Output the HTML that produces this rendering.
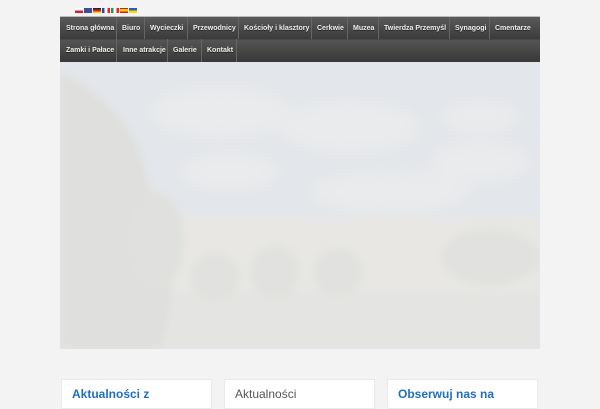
<!DOCTYPE html>
<html><head><meta charset="utf-8"><style>
*{margin:0;padding:0;box-sizing:border-box}
body{width:600px;height:400px;background:#f3f3f3;position:relative;overflow:hidden;font-family:"Liberation Sans",sans-serif}
.fl{position:absolute;top:8px;width:8px;height:5px}
.topline{position:absolute;left:60px;top:16px;width:480px;height:1px;background:#bbb}
.nav{position:absolute;left:60px;top:17px;width:480px;height:45px;background:linear-gradient(#5a5a5a,#3a3a3a 50%,#555 50%,#383838)}
.nav span{position:absolute;color:#eee;font-size:7px;font-weight:bold;white-space:nowrap;text-shadow:0 1px 0 #222}
.sep{position:absolute;width:1px;background:#2e2e2e;border-right:1px solid #666}
.photo{position:absolute;left:60px;top:62px;width:480px;height:287px;overflow:hidden;background:#e4e6e9}
.box{position:absolute;top:379px;width:151px;height:30px;background:#fff;border:1px solid #eaeaea}
.box b{position:absolute;left:10px;top:7px;font-size:12px;color:#1f6fc0}
</style></head><body>
<div class="fl" style="left:75px;background:linear-gradient(#fff 50%,#d2203a 50%)"></div>
<div class="fl" style="left:84px;background:#3d4f8e"></div>
<div class="fl" style="left:93px;background:linear-gradient(#222 33%,#d22 33%,#d22 66%,#fc0 66%)"></div>
<div class="fl" style="left:102px;background:linear-gradient(90deg,#2547a8 33%,#fff 33%,#fff 66%,#e22 66%)"></div>
<div class="fl" style="left:111px;background:linear-gradient(90deg,#1a9a4a 33%,#fff 33%,#fff 66%,#e22 66%)"></div>
<div class="fl" style="left:120px;background:linear-gradient(#c22 25%,#fc0 25%,#fc0 75%,#c22 75%)"></div>
<div class="fl" style="left:129px;background:linear-gradient(#2a5bc0 50%,#fd0 50%)"></div>
<div class="topline"></div>
<div class="nav">
<span style="left:6px;top:8px">Strona główna</span>
<span style="left:62px;top:8px">Biuro</span>
<span style="left:90px;top:8px">Wycieczki</span>
<span style="left:133px;top:8px">Przewodnicy</span>
<span style="left:184px;top:8px">Kościoły i klasztory</span>
<span style="left:257px;top:8px">Cerkwie</span>
<span style="left:293px;top:8px">Muzea</span>
<span style="left:324px;top:8px">Twierdza Przemyśl</span>
<span style="left:395px;top:8px">Synagogi</span>
<span style="left:435px;top:8px">Cmentarze</span>
<span style="left:6px;top:30px">Zamki i Pałace</span>
<span style="left:63px;top:30px">Inne atrakcje</span>
<span style="left:113px;top:30px">Galerie</span>
<span style="left:147px;top:30px">Kontakt</span>
<div class="sep" style="left:56px;top:0;height:22px"></div>
<div class="sep" style="left:84px;top:0;height:22px"></div>
<div class="sep" style="left:127px;top:0;height:22px"></div>
<div class="sep" style="left:178px;top:0;height:22px"></div>
<div class="sep" style="left:251px;top:0;height:22px"></div>
<div class="sep" style="left:287px;top:0;height:22px"></div>
<div class="sep" style="left:318px;top:0;height:22px"></div>
<div class="sep" style="left:389px;top:0;height:22px"></div>
<div class="sep" style="left:429px;top:0;height:22px"></div>
<div class="sep" style="left:56px;top:22px;height:23px"></div>
<div class="sep" style="left:107px;top:22px;height:23px"></div>
<div class="sep" style="left:141px;top:22px;height:23px"></div>
<div class="sep" style="left:176px;top:22px;height:23px"></div>
</div>
<div class="photo">
<svg width="480" height="287" viewBox="0 0 480 287">
<defs><filter id="b"><feGaussianBlur stdDeviation="8"/></filter><filter id="s"><feGaussianBlur stdDeviation="4"/></filter></defs>
<rect width="480" height="287" fill="#e3e6ea"/>
<g filter="url(#b)" fill="#eaebec">
<ellipse cx="160" cy="50" rx="70" ry="25"/><ellipse cx="290" cy="65" rx="70" ry="25"/>
<ellipse cx="420" cy="55" rx="40" ry="15"/><ellipse cx="170" cy="110" rx="50" ry="18"/>
<ellipse cx="330" cy="130" rx="80" ry="20"/><ellipse cx="420" cy="100" rx="50" ry="20"/>
</g>
<g filter="url(#s)">
<rect x="100" y="155" width="380" height="80" fill="#e8e7e4"/>
<rect x="0" y="230" width="480" height="57" fill="#e4e4e2"/>
<path d="M0 10 Q60 40 80 90 Q95 150 110 160 Q120 230 100 287 L0 287Z" fill="#dfe0dd"/>
<ellipse cx="95" cy="180" rx="30" ry="50" fill="#e0e1de"/>
<ellipse cx="155" cy="215" rx="26" ry="25" fill="#e1e2df"/>
<ellipse cx="215" cy="210" rx="26" ry="28" fill="#e1e2df"/>
<ellipse cx="278" cy="210" rx="26" ry="25" fill="#e1e2df"/>
<ellipse cx="430" cy="195" rx="50" ry="30" fill="#e1e2df"/>
</g>
</svg>
</div>
<div class="box" style="left:61px"><b>Aktualności z</b></div>
<div class="box" style="left:224px"><b style="color:#555;font-weight:normal">Aktualności</b></div>
<div class="box" style="left:387px"><b>Obserwuj nas na</b></div>
</body></html>
